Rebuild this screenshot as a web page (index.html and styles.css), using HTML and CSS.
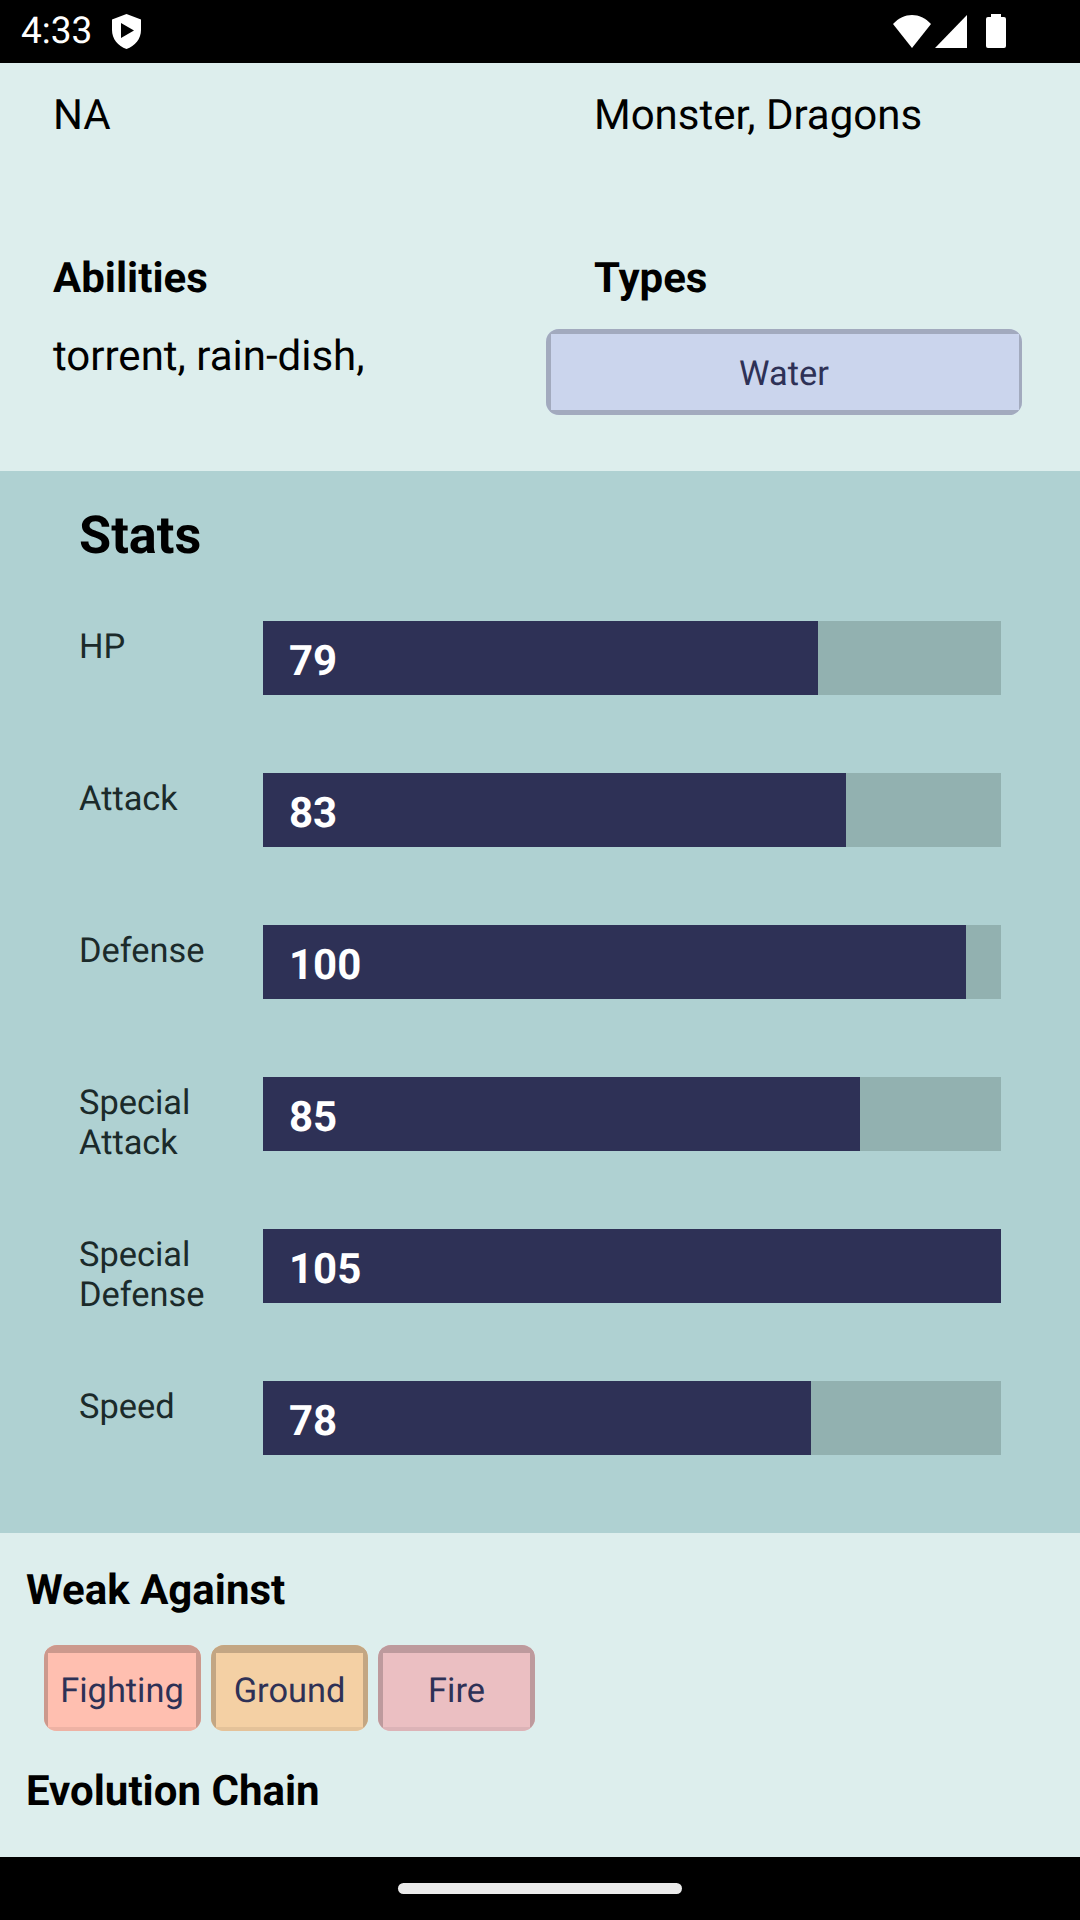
FILE: index.html
```html
<!DOCTYPE html>
<html lang="en">
  <head>
    <meta charset="UTF-8" />
    <meta name="viewport" content="width=device-width, initial-scale=1.0" />
    <title>Details</title>
    <link rel="stylesheet" href="styles.css">
  </head>

  <body>
    <div class="statusBar">
      <div class="statusLeft">
        <span class="clock">4:33</span>
        <svg class="shield" width="29" height="35" viewBox="0 0 29 35">
          <path fill="#fff" fill-rule="evenodd" d="M14.5 0 L29 5.5 V16 C29 25 23 32 14.5 35 C6 32 0 25 0 16 V5.5 Z M9 9 V24 L22 16.5 Z" />
        </svg>
      </div>
      <div class="statusRight">
        <svg width="38" height="33" viewBox="0 0 38 33">
          <path fill="#fff" d="M0 9 C11 -3 27 -3 38 9 L19 33 Z" />
        </svg>
        <svg width="32" height="33" viewBox="0 0 32 33">
          <path fill="#fff" d="M32 0 V33 H0 Z" />
        </svg>
        <svg width="20" height="34" viewBox="0 0 20 34">
          <path fill="#fff" d="M5 0 H15 V3 H18 Q20 3 20 5 V32 Q20 34 18 34 H2 Q0 34 0 32 V5 Q0 3 2 3 H5 Z" />
        </svg>
      </div>
    </div>

    <div class="content">
      <div class="info">
        <div class="infoRow topRow">
          <div class="infoCol"><p class="infoText">NA</p></div>
          <div class="infoCol"><p class="infoText">Monster, Dragons</p></div>
        </div>
        <div class="infoRow">
          <div class="infoCol">
            <h3 class="infoTitle">Abilities</h3>
            <p class="infoText">torrent, rain-dish,</p>
          </div>
          <div class="infoCol">
            <h3 class="infoTitle">Types</h3>
            <div class="chip chipWide water"><div class="chipFace">Water</div></div>
          </div>
        </div>
      </div>

      <div class="stats">
        <h2 class="statsTitle">Stats</h2>
        <div class="statRow">
          <div class="statLabel">HP</div>
          <div class="statTrack"><div class="statFill" style="width: 75.24%">79</div></div>
        </div>
        <div class="statRow">
          <div class="statLabel">Attack</div>
          <div class="statTrack"><div class="statFill" style="width: 79.05%">83</div></div>
        </div>
        <div class="statRow">
          <div class="statLabel">Defense</div>
          <div class="statTrack"><div class="statFill" style="width: 95.24%">100</div></div>
        </div>
        <div class="statRow">
          <div class="statLabel">Special Attack</div>
          <div class="statTrack"><div class="statFill" style="width: 80.95%">85</div></div>
        </div>
        <div class="statRow">
          <div class="statLabel">Special Defense</div>
          <div class="statTrack"><div class="statFill" style="width: 100%">105</div></div>
        </div>
        <div class="statRow">
          <div class="statLabel">Speed</div>
          <div class="statTrack"><div class="statFill" style="width: 74.29%">78</div></div>
        </div>
      </div>

      <div class="weak">
        <h3 class="sectionTitle">Weak Against</h3>
        <div class="chipRow">
          <div class="chip fighting"><div class="chipFace">Fighting</div></div>
          <div class="chip ground"><div class="chipFace">Ground</div></div>
          <div class="chip fire"><div class="chipFace">Fire</div></div>
        </div>
        <h3 class="sectionTitle evolution">Evolution Chain</h3>
      </div>
    </div>

    <div class="navBar"><div class="navPill"></div></div>
  </body>
</html>
```

FILE: styles.css
```css
* {
  box-sizing: border-box;
}

body {
  margin: 0;
  width: 1080px;
  height: 1920px;
  display: flex;
  flex-direction: column;
  font-family: Roboto, sans-serif;
  text-rendering: geometricPrecision;
  background-color: #ddeeed;
  overflow: hidden;
}

h2,
h3,
p {
  margin: 0;
}

.statusBar {
  height: 63px;
  background-color: #000;
  display: flex;
  justify-content: space-between;
  align-items: center;
  padding: 0 74px 0 21px;
}

.statusLeft {
  display: flex;
  align-items: center;
  gap: 20px;
}

.clock {
  color: #fff;
  font-size: 37px;
}

.statusRight {
  display: flex;
  align-items: center;
  gap: 4px;
  padding-bottom: 1px;
}

.statusRight svg + svg + svg {
  margin-left: 15px;
}

.content {
  flex: 1;
  display: flex;
  flex-direction: column;
}

.info {
  height: 408px;
  padding: 0 59px 0 53px;
}

.infoRow {
  display: flex;
}

.topRow {
  height: 183px;
  padding-top: 28px;
}

.infoCol {
  flex: 0 0 541px;
}

.infoCol + .infoCol {
  flex: 1;
}

.infoText {
  font-size: 42px;
  line-height: 50px;
  color: #000;
}

.infoTitle {
  font-size: 42px;
  line-height: 50px;
  font-weight: 700;
  margin-bottom: 28px;
  padding-top: 8px;
}

.chip {
  width: 157px;
  height: 86px;
  border-radius: 13px;
  overflow: hidden;
  font-size: 34.4px;
  color: #2e3156;
}

.chipFace {
  height: 100%;
  display: flex;
  justify-content: center;
  align-items: center;
  border-style: solid;
  padding-top: 2px;
}

.chipWide {
  width: 476px;
  margin: -3px 0 0 -48px;
}

.water .chipFace {
  background-color: #cbd5ed;
  border-color: #a2aabe;
  border-width: 5px 3px 5px 5px;
  padding: 4px 2px 0 0;
}

.fighting .chipFace {
  background-color: #ffbfb0;
  border-width: 8px 5px 4px 4px;
  border-color: #cc998d;
  border-bottom-color: #eeb2a4;
}

.ground .chipFace {
  background-color: #f4d0a4;
  border-width: 8px 5px 4px 5px;
  border-color: #c3a683;
  border-bottom-color: #e4c299;
}

.fire .chipFace {
  background-color: #ebbfc2;
  border-width: 8px 5px 4px 5px;
  border-color: #bd9a9d;
  border-bottom-color: #dcb3b7;
}

.stats {
  height: 1062px;
  background-color: #afd1d2;
  padding: 36px 79px 0 79px;
}

.statsTitle {
  font-size: 52.25px;
  line-height: 58px;
  font-weight: 700;
  margin-bottom: 56px;
}

.statRow {
  display: flex;
  height: 74px;
  margin-bottom: 78px;
}

.statLabel {
  flex: 0 0 184px;
  padding: 7px 30px 0 0;
  font-size: 34.4px;
  line-height: 39.5px;
  color: #1b2a2a;
}

.statTrack {
  flex: 1;
  background-color: #92b1b0;
}

.statFill {
  height: 100%;
  background-color: #2e3156;
  color: #fff;
  font-size: 42px;
  font-weight: 700;
  padding: 12px 0 0 26px;
  line-height: 58px;
}

.weak {
  flex: 1;
  padding: 33px 0 0 26px;
}

.sectionTitle {
  font-size: 42px;
  line-height: 50px;
  font-weight: 700;
}

.chipRow {
  display: flex;
  gap: 10px;
  margin: 29px 0 0 18px;
}

.evolution {
  margin-top: 36px;
}

.navBar {
  height: 63px;
  background-color: #000;
  display: flex;
  justify-content: center;
  padding-top: 26px;
}

.navPill {
  width: 284px;
  height: 11px;
  border-radius: 6px;
  background-color: #ebebeb;
}
```
